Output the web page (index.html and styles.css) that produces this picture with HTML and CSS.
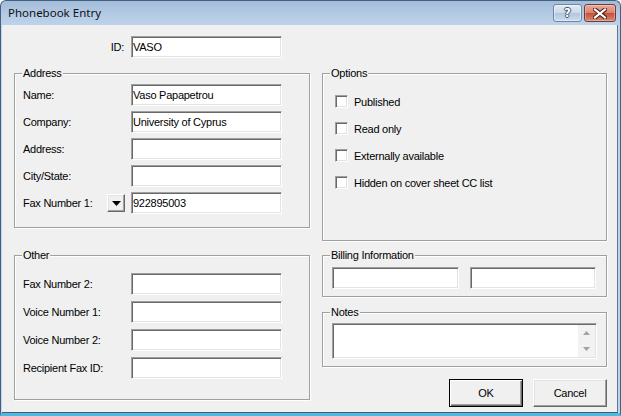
FILE: index.html
```html
<!DOCTYPE html>
<html>
<head>
<meta charset="utf-8">
<title>Phonebook Entry</title>
<link rel="stylesheet" href="styles.css">
</head>
<body>
<div class="window">
  <div class="titlebar">
    <span class="title">Phonebook Entry</span>
    <div class="caption-buttons">
      <div class="cap-btn help"><span class="help-glyph">?</span></div>
      <div class="cap-btn close">
        <svg width="14" height="11" viewBox="0 0 14 11">
          <path d="M2 1.5 L12 9.5 M12 1.5 L2 9.5" stroke="#4a1d16" stroke-width="4.2" stroke-linecap="square" fill="none"/>
          <path d="M2 1.5 L12 9.5 M12 1.5 L2 9.5" stroke="#ffffff" stroke-width="2.2" stroke-linecap="square" fill="none"/>
        </svg>
      </div>
    </div>
  </div>
  <div class="client">
    <div class="col col-left">
      <div class="id-row">
        <span class="id-label">ID:</span>
        <input class="field" type="text" value="VASO">
      </div>
      <fieldset class="group group-address">
        <legend>Address</legend>
        <div class="rows rows-address">
          <div class="row"><span class="lbl">Name:</span><input class="field" type="text" value="Vaso Papapetrou"></div>
          <div class="row"><span class="lbl">Company:</span><input class="field" type="text" value="University of Cyprus"></div>
          <div class="row"><span class="lbl">Address:</span><input class="field" type="text" value=""></div>
          <div class="row"><span class="lbl">City/State:</span><input class="field" type="text" value=""></div>
          <div class="row">
            <span class="lbl lbl-fax">Fax Number 1:
              <span class="drop-btn">
                <svg width="9" height="5" viewBox="0 0 9 5"><path d="M0 0 H9 L4.5 5 Z" fill="#000"/></svg>
              </span>
            </span>
            <input class="field" type="text" value="922895003">
          </div>
        </div>
      </fieldset>
      <fieldset class="group group-other">
        <legend>Other</legend>
        <div class="rows rows-other">
          <div class="row"><span class="lbl">Fax Number 2:</span><input class="field" type="text" value=""></div>
          <div class="row"><span class="lbl">Voice Number 1:</span><input class="field" type="text" value=""></div>
          <div class="row"><span class="lbl">Voice Number 2:</span><input class="field" type="text" value=""></div>
          <div class="row"><span class="lbl">Recipient Fax ID:</span><input class="field" type="text" value=""></div>
        </div>
      </fieldset>
    </div>
    <div class="col col-right">
      <fieldset class="group group-options">
        <legend>Options</legend>
        <div class="checks">
          <div class="check"><span class="box"></span><span>Published</span></div>
          <div class="check"><span class="box"></span><span>Read only</span></div>
          <div class="check"><span class="box"></span><span>Externally available</span></div>
          <div class="check"><span class="box"></span><span>Hidden on cover sheet CC list</span></div>
        </div>
      </fieldset>
      <fieldset class="group group-billing">
        <legend>Billing Information</legend>
        <div class="billing-fields">
          <input class="field billing-a" type="text" value="">
          <input class="field billing-b" type="text" value="">
        </div>
      </fieldset>
      <fieldset class="group group-notes">
        <legend>Notes</legend>
        <div class="memo">
          <div class="memo-text"></div>
          <div class="vscroll">
            <svg width="7" height="4" viewBox="0 0 7 4"><path d="M0 4 L3.5 0 L7 4 Z" fill="#a3a3a3"/></svg>
            <svg width="7" height="4" viewBox="0 0 7 4"><path d="M0 0 L7 0 L3.5 4 Z" fill="#a3a3a3"/></svg>
          </div>
        </div>
      </fieldset>
      <div class="buttons">
        <button class="btn btn-default" type="button">OK</button>
        <button class="btn" type="button">Cancel</button>
      </div>
    </div>
  </div>
</div>
</body>
</html>
```
FILE: styles.css
```css
* {
  box-sizing: border-box;
}

html, body {
  margin: 0;
  padding: 0;
}

body {
  width: 621px;
  height: 416px;
  overflow: hidden;
  background: #ffffff;
  font-family: "Liberation Sans", Arial, sans-serif;
  font-size: 11px;
  letter-spacing: -0.25px;
  color: #000;
}

.window {
  width: 621px;
  height: 416px;
  display: flex;
  flex-direction: column;
  border: 1px solid #44607e;
  border-bottom: 3px solid #47bde6;
  border-radius: 6px 6px 0 0;
  background: linear-gradient(to bottom, #a3bcd9 0px, #b4cbe5 14px, #bed3ea 24px, #bfd4eb 100%);
}

/* ---------- title bar ---------- */
.titlebar {
  height: 24px;
  flex: none;
  display: flex;
  align-items: flex-start;
  padding: 3px 4px 0 7px;
}

.title {
  font-family: "Noto Sans", "Open Sans", sans-serif;
  font-size: 11.5px;
  letter-spacing: 0;
  line-height: 18px;
  color: #111;
}

.caption-buttons {
  margin-left: auto;
  display: flex;
  gap: 2px;
}

.cap-btn {
  height: 18px;
  border-radius: 3px;
  display: flex;
  align-items: center;
  justify-content: center;
}

.help {
  width: 29px;
  border: 1px solid #6c87a6;
  background: linear-gradient(to bottom, #e2eaf4 0%, #cbd9ea 48%, #b2c7df 52%, #c9dbee 100%);
  box-shadow: inset 0 0 0 1px rgba(255, 255, 255, 0.45);
}

.help-glyph {
  font-family: "DejaVu Sans", sans-serif;
  font-weight: bold;
  font-size: 12px;
  letter-spacing: 0;
  line-height: 14px;
  color: #ffffff;
  text-shadow: 1px 0 0 #3f536b, -1px 0 0 #3f536b, 0 1px 0 #3f536b, 0 -1px 0 #3f536b;
}

.close {
  width: 32px;
  border: 1px solid #6f3b33;
  background: linear-gradient(to bottom, #e9ab9b 0%, #d9826d 48%, #c5503b 52%, #d58a72 100%);
  box-shadow: inset 0 0 0 1px rgba(255, 255, 255, 0.3);
}

/* ---------- client ---------- */
.client {
  flex: 1;
  display: flex;
  gap: 12px;
  margin: 0 2px 0 1px;
  padding: 11px 10px 0 12px;
  background: #f0f0f0;
  border-right: 1px solid #5d7896;
  border-bottom: 1px solid #48596b;
}

.col {
  display: flex;
  flex-direction: column;
}

.col-left {
  width: 296px;
}

.col-right {
  width: 285px;
}

/* ---------- fields ---------- */
.field {
  display: block;
  height: 22px;
  margin: 0;
  padding: 0 0 0 1px;
  font-family: "Liberation Sans", Arial, sans-serif;
  font-size: 11px;
  letter-spacing: -0.25px;
  color: #000;
  background: #ffffff;
  border: 1px solid;
  border-color: #a0a0a0 #ffffff #ffffff #a0a0a0;
  box-shadow: inset 1px 1px 0 #696969, inset -1px -1px 0 #e3e3e3;
  outline: none;
}

.id-row {
  display: flex;
  align-items: center;
  height: 22px;
}

.id-label {
  width: 117px;
  text-align: right;
  padding-right: 7px;
}

.id-row .field,
.row .field {
  width: 151px;
}

/* ---------- group boxes ---------- */
.group {
  margin: 0;
  min-width: 0;
  border: 1px solid #a0a0a0;
  box-shadow: inset 1px 1px 0 #ffffff, 1px 1px 0 #ffffff;
}

.group legend {
  font-size: 11px;
  line-height: 13px;
  padding: 0 1px;
  background: #f0f0f0;
}

.group-address {
  margin-top: 9px;
  padding: 4px 0 13px 8px;
}

.group-other {
  margin-top: 21px;
  padding: 11px 0 20px 8px;
}

.group-address legend,
.group-other legend {
  margin-left: -1px;
}

.rows {
  display: flex;
  flex-direction: column;
}

.rows-address {
  gap: 5px;
}

.rows-other {
  gap: 6px;
}

.row {
  display: flex;
  align-items: center;
  height: 22px;
}

.lbl {
  width: 108px;
  flex: none;
}

.lbl-fax {
  display: flex;
  align-items: center;
}

.drop-btn {
  margin-left: auto;
  margin-right: 6px;
  width: 18px;
  height: 18px;
  display: flex;
  align-items: center;
  justify-content: center;
  background: #f0f0f0;
  border: 1px solid;
  border-color: #ffffff #696969 #696969 #ffffff;
  box-shadow: inset -1px -1px 0 #a0a0a0, inset 1px 1px 0 #e3e3e3;
}

/* ---------- options ---------- */
.group-options {
  margin-top: 31px;
  height: 174px;
  padding: 15px 0 0 12px;
}

.group-options legend {
  margin-left: -5px;
}

.checks {
  display: flex;
  flex-direction: column;
  gap: 14px;
}

.check {
  display: flex;
  align-items: center;
  height: 13px;
  gap: 6px;
}

.box {
  width: 13px;
  height: 13px;
  flex: none;
  background: #ffffff;
  border: 1px solid;
  border-color: #a0a0a0 #ffffff #ffffff #a0a0a0;
  box-shadow: inset 1px 1px 0 #696969, inset -1px -1px 0 #e3e3e3;
}

/* ---------- billing ---------- */
.group-billing {
  margin-top: 8px;
  padding: 5px 0 7px 9px;
}

.group-billing legend,
.group-notes legend {
  margin-left: -2px;
}

.billing-fields {
  display: flex;
  gap: 11px;
}

.billing-a {
  width: 127px;
}

.billing-b {
  width: 126px;
}

/* ---------- notes ---------- */
.group-notes {
  margin-top: 9px;
  padding: 4px 0 7px 9px;
}

.memo {
  width: 265px;
  height: 36px;
  display: flex;
  background: #ffffff;
  border: 1px solid;
  border-color: #a0a0a0 #ffffff #ffffff #a0a0a0;
  box-shadow: inset 1px 1px 0 #696969, inset -1px -1px 0 #e3e3e3;
  padding: 1px 1px 1px 1px;
}

.memo-text {
  flex: 1;
}

.vscroll {
  width: 17px;
  flex: none;
  background: #f2f2f2;
  display: flex;
  flex-direction: column;
  align-items: center;
  justify-content: space-between;
  padding: 6px 0 6px 0;
}

/* ---------- buttons ---------- */
.buttons {
  margin-top: 12px;
  display: flex;
  justify-content: flex-end;
  gap: 10px;
}

.btn {
  width: 74px;
  height: 28px;
  margin: 0;
  padding: 0;
  font-family: "Liberation Sans", Arial, sans-serif;
  font-size: 11px;
  letter-spacing: -0.25px;
  color: #000;
  background: #f0f0f0;
  border: 1px solid;
  border-color: #ffffff #696969 #696969 #ffffff;
  box-shadow: inset -1px -1px 0 #a0a0a0, inset 1px 1px 0 #e3e3e3;
}

.btn-default {
  border: 1px solid #000000;
  box-shadow: inset 1px 1px 0 #ffffff, inset -1px -1px 0 #696969, inset -2px -2px 0 #a0a0a0;
}
```
